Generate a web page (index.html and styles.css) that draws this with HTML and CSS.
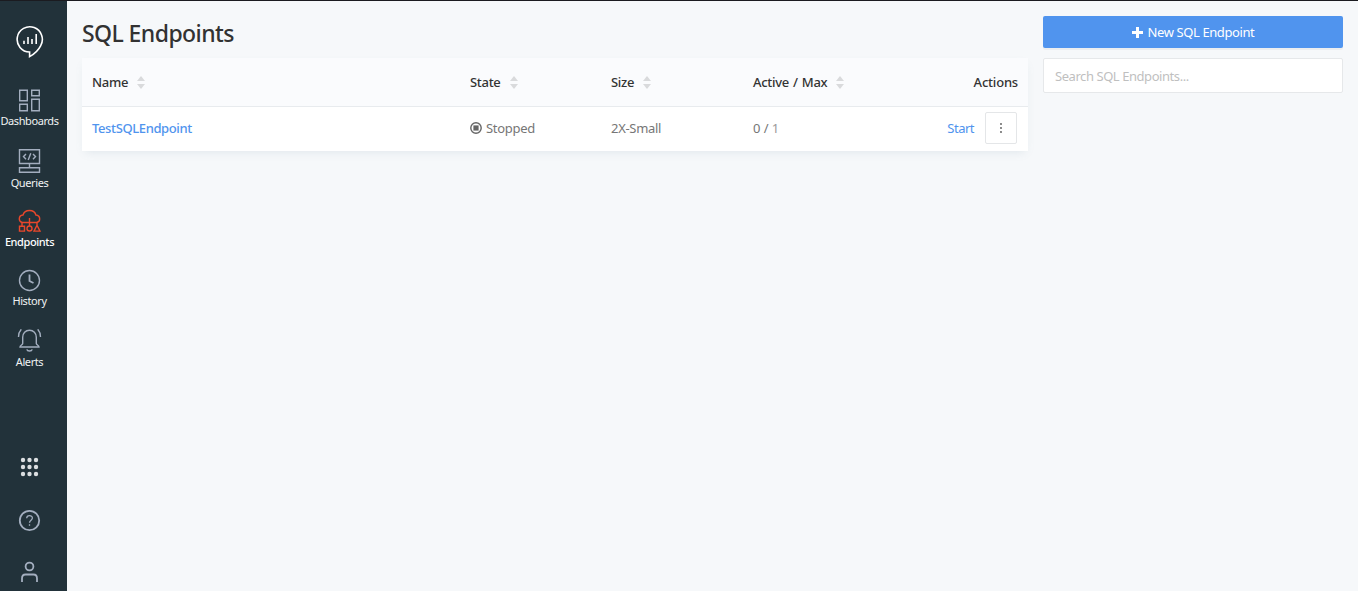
FILE: index.html
```html
<!DOCTYPE html>
<html lang="en">
<head>
  <meta charset="UTF-8" />
  <title>SQL Endpoints</title>
  <link rel="stylesheet" href="styles.css">
</head>
<body>
  <nav class="sidebar">
    <a class="logo">
      <svg width="28" height="34" viewBox="0 0 28 34" fill="none" stroke="#fff" stroke-width="1.6">
        <path d="M13.600 27A12.600 12.600 0 1 1 24.600 20.800C22.400 25.200 18.200 29 13.600 31.600Z" />
        <path d="M8 15.700v3.300M12 12v7M16 14v5M20.200 9v10" />
      </svg>
    </a>

    <a class="nav-item tight">
      <svg width="25" height="24" viewBox="0 0 24 24">
        <path d="M2.200 1.200h7.600v10.600H2.200zM14.200 1.200h7.600v5.600h-7.600zM2.200 15.200h7.600v6.600H2.200zM14.200 10.200h7.600v11.600h-7.600z" />
      </svg>
      <span>Dashboards</span>
    </a>
    <a class="nav-item low">
      <svg width="25" height="24" viewBox="0 0 24 24">
        <path d="M2 .7h20v13.800H2zM2 18.700h20v4.600H2zM12 14.500v4.200" />
        <path d="M8.500 5 6 7.600l2.500 2.600M15.500 5 18 7.600l-2.500 2.600M13.300 4.200l-2.600 6.800" />
      </svg>
      <span>Queries</span>
    </a>
    <a class="nav-item active">
      <svg width="25" height="24" viewBox="0 0 24 24">
        <path d="M4.500 13.500C2.800 12.800 1.800 11.500 1.800 9.900c0-2.100 1.600-3.700 3.700-3.900C6.300 3.300 8.800 1.500 12 1.500s5.700 1.800 6.400 4.500c2.200.3 3.800 1.900 3.800 3.900 0 1.700-1 3-2.700 3.600" />
        <path d="M12 9v8M4.500 17v-3.500h15V17M2 17.200h5v4.900H2zM19.500 16.200l3 5.900h-6z" />
        <circle cx="12" cy="19.500" r="2.500" />
      </svg>
      <span>Endpoints</span>
    </a>
    <a class="nav-item tight">
      <svg width="25" height="24" viewBox="0 0 24 24">
        <circle cx="12" cy="11.500" r="10" />
        <path d="M12 5.500v6.500l4 2" stroke-width="1.800" />
      </svg>
      <span>History</span>
    </a>
    <a class="nav-item">
      <svg width="25" height="24" viewBox="0 0 24 24">
        <path d="M5.200 14.500V8.300C5.200 4.300 8 1.300 12 1.300s6.800 3 6.800 7v6.200c0 1.300 2.700 1.700 2.700 3.500H2.500c0-1.800 2.700-2.200 2.700-3.500z" />
        <path d="M9.300 20.300c.5 2.200 4.900 2.200 5.400 0M3.800.3C1.900 2.300 1 4.800 1 8M20.200.3C22.100 2.300 23 4.800 23 8" />
      </svg>
      <span>Alerts</span>
    </a>

    <div class="nav-bottom">
      <svg class="apps" width="21" height="20" viewBox="0 0 20 20">
        <circle cx="3.500" cy="3" r="2.200" /><circle cx="10" cy="3" r="2.200" /><circle cx="16.500" cy="3" r="2.200" />
        <circle cx="3.500" cy="10" r="2.200" /><circle cx="10" cy="10" r="2.200" /><circle cx="16.500" cy="10" r="2.200" />
        <circle cx="3.500" cy="17" r="2.200" /><circle cx="10" cy="17" r="2.200" /><circle cx="16.500" cy="17" r="2.200" />
      </svg>
      <svg width="25" height="24" viewBox="0 0 24 24">
        <circle cx="12" cy="11.500" r="9.700" stroke-width="1.800" />
        <path d="M9.200 9.300c0-3.600 5.700-3.500 5.700-.2 0 2-2.900 2.200-2.900 4.600M12 15.300v1.500" stroke-width="1.300" />
      </svg>
      <svg width="25" height="24" viewBox="0 0 24 24">
        <circle cx="12" cy="6.500" r="3.900" stroke-width="1.800" />
        <path d="M4.500 22v-3.500c0-2.300 1.400-4 3.500-4h8c2.100 0 3.500 1.700 3.500 4V22" stroke-width="1.800" />
      </svg>
    </div>
  </nav>

  <main class="content">
    <section class="list">
      <h1>SQL Endpoints</h1>
      <table class="endpoints">
        <thead>
          <tr>
            <th class="col-name">Name <span class="sorter"></span></th>
            <th class="col-state">State <span class="sorter"></span></th>
            <th class="col-size">Size <span class="sorter"></span></th>
            <th class="col-active">Active / Max <span class="sorter"></span></th>
            <th class="col-actions">Actions</th>
          </tr>
        </thead>
        <tbody>
          <tr>
            <td><a class="name">TestSQLEndpoint</a></td>
            <td>
              <div class="state">
                <svg width="12" height="12" viewBox="0 0 12 12">
                  <circle cx="6" cy="6" r="5.200" fill="none" stroke="#666" stroke-width="1.400" />
                  <rect x="3.400" y="3.400" width="5.200" height="5.200" fill="#666" />
                </svg>
                <span>Stopped</span>
              </div>
            </td>
            <td>2X-Small</td>
            <td>0 / <span class="max">1</span></td>
            <td>
              <div class="actions">
                <a class="start">Start</a>
                <button class="more">
                  <svg width="4" height="12" viewBox="0 0 4 12" fill="#555">
                    <circle cx="2" cy="2" r=".9" /><circle cx="2" cy="6" r=".9" /><circle cx="2" cy="10" r=".9" />
                  </svg>
                </button>
              </div>
            </td>
          </tr>
        </tbody>
      </table>
    </section>

    <aside class="tools">
      <button class="new-endpoint">
        <svg width="11" height="11" viewBox="0 0 11 11" fill="#fff"><path d="M4 0h3v4h4v3H7v4H4V7H0V4h4z" /></svg>
        <span>New SQL Endpoint</span>
      </button>
      <input class="search" type="text" placeholder="Search SQL Endpoints...">
    </aside>
  </main>
</body>
</html>
```
FILE: styles.css
```css
* {
  box-sizing: border-box;
}

body {
  margin: 0;
  height: 591px;
  display: flex;
  overflow: hidden;
  border-top: 1px solid #1b1b20;
  background: #f6f8fa;
  color: #767676;
  font-family: "Segoe UI", "Noto Sans", sans-serif;
  font-size: 13px;
  line-height: 20px;
}

/* sidebar */
.sidebar {
  width: 67px;
  padding: 24px 8px 7px 0;
  flex-shrink: 0;
  display: flex;
  flex-direction: column;
  align-items: center;
  background: #22323a;
}

.sidebar svg {
  display: block;
  fill: none;
}

.logo {
  height: 64px;
}

.nav-item {
  height: 60px;
  display: flex;
  flex-direction: column;
  align-items: center;
  gap: 1px;
  color: #f0f2f3;
  font-size: 11px;
  line-height: 16px;
  letter-spacing: -0.4px;
}

.nav-item svg,
.nav-bottom svg {
  stroke: #a3aebf;
  stroke-width: 1.4;
}

.nav-item.tight {
  gap: 0;
}

.nav-item.low {
  gap: 2px;
}

.nav-item.active {
  color: #fff;
  font-weight: 500;
}

.nav-item.active svg {
  stroke: #e8472b;
}

.nav-bottom {
  margin-top: auto;
  display: flex;
  flex-direction: column;
  align-items: center;
  gap: 27px;
}

.nav-bottom .apps {
  margin-bottom: 5px;
  fill: #dcdfe1;
  stroke: none;
}

/* main area */
.content {
  flex: 1;
  padding: 15px;
  display: flex;
  gap: 15px;
}

.list {
  flex: 1;
}

h1 {
  margin: 0 0 8px;
  color: #323232;
  font-size: 23px;
  font-weight: 500;
  line-height: 34px;
  letter-spacing: -0.58px;
}

.endpoints {
  width: 100%;
  table-layout: fixed;
  border-collapse: separate;
  border-spacing: 0;
  background: #fff;
  box-shadow: 0 4px 9px -3px rgba(102, 136, 153, 0.15);
}

.endpoints th {
  height: 49px;
  padding: 0 10px;
  border-bottom: 1px solid #e8ebee;
  background: #fafbfd;
  color: #333;
  font-weight: 500;
  letter-spacing: -0.3px;
  word-spacing: 1px;
  text-align: left;
}

.endpoints td {
  height: 44px;
  padding: 0 10px 2px;
  letter-spacing: -0.3px;
  word-spacing: 0.5px;
}

.col-name {
  width: 378px;
}

.col-state {
  width: 141px;
}

.col-size {
  width: 142px;
}

.col-active {
  width: 150px;
}

.endpoints .col-actions {
  text-align: right;
  letter-spacing: -0.2px;
}

.sorter {
  display: inline-flex;
  flex-direction: column;
  gap: 3px;
  margin-left: 5px;
  vertical-align: top;
  padding-top: 4px;
}

.sorter::before,
.sorter::after {
  content: "";
  border: 4px solid transparent;
}

.sorter::before {
  border-top: 0;
  border-bottom: 5px solid #d9dadc;
}

.sorter::after {
  border-bottom: 0;
  border-top: 5px solid #d9dadc;
}

.name {
  color: #5094ee;
  font-weight: 500;
  letter-spacing: -0.38px;
}

.state {
  display: flex;
  align-items: center;
  gap: 4px;
}

.max {
  color: #999;
}

.actions {
  padding-right: 1px;
  display: flex;
  align-items: center;
  justify-content: flex-end;
  gap: 11px;
}

.start {
  color: #5094ee;
  letter-spacing: -0.5px;
}

.more {
  width: 32px;
  height: 32px;
  padding: 0;
  display: flex;
  align-items: center;
  justify-content: center;
  border: 1px solid #e4e6e8;
  border-radius: 2px;
  background: #fff;
}

.tools {
  width: 300px;
  display: flex;
  flex-direction: column;
  gap: 10px;
}

.new-endpoint {
  height: 32px;
  display: flex;
  align-items: center;
  justify-content: center;
  gap: 5px;
  border: 0;
  border-radius: 2px;
  background: #5094ee;
  box-shadow: 0 2px 0 rgba(0, 0, 0, 0.04);
  color: #fff;
  font: inherit;
  letter-spacing: -0.4px;
}

.search {
  height: 35px;
  padding: 0 11px;
  border: 1px solid #e6e8ea;
  border-radius: 2px;
  background: #fff;
  font: inherit;
  letter-spacing: -0.44px;
}

.search::placeholder {
  color: #bfbfbf;
}
```
